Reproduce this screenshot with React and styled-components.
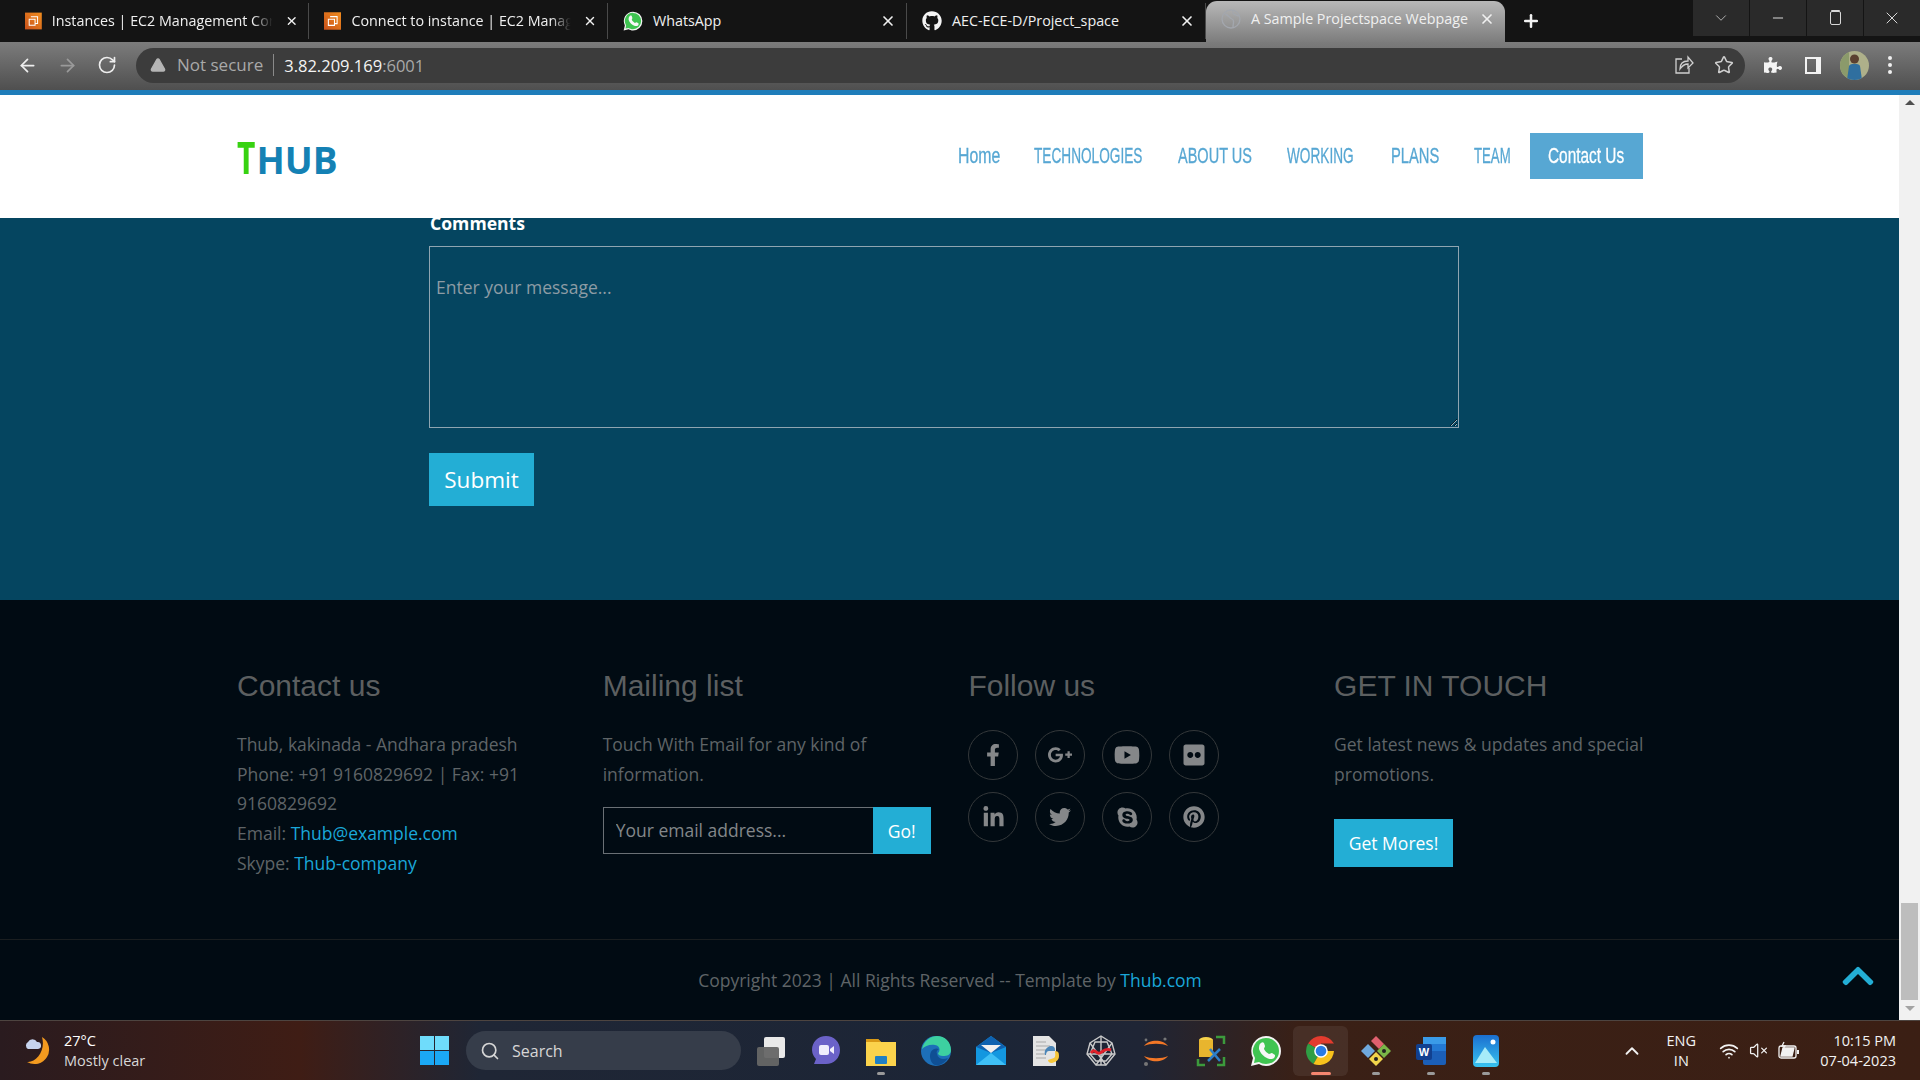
import React from 'react';
import styled, { createGlobalStyle } from 'styled-components';
import {
  FaFacebookF, FaYoutube, FaFlickr, FaLinkedinIn, FaTwitter, FaSkype, FaPinterest,
  FaChevronUp, FaGithub, FaPuzzlePiece,
} from 'react-icons/fa';
import { ImGooglePlus } from 'react-icons/im';
import {
  ArrowLeft, ArrowRight, RotateCw, TriangleAlert, Star, X, Plus, ChevronDown, Minus, Search,
  ChevronUp, Wifi, VolumeX,
} from 'lucide-react';

const GlobalStyle = createGlobalStyle`
  html, body {
    margin: 0;
    padding: 0;
    overflow: hidden;
    background: #010b13;
  }
  * {
    box-sizing: border-box;
  }
`;

const Screen = styled.div`
  width: 1920px;
  height: 1080px;
  display: flex;
  flex-direction: column;
  overflow: hidden;
  font-family: 'Open Sans', sans-serif;
`;

/* browser chrome */
const TabStrip = styled.div`
  height: 42px;
  flex: none;
  display: flex;
  background: #141414;
  padding-left: 10px;
`;

const Tab = styled.div`
  width: 299px;
  height: ${(p) => (p.$active ? '41px' : '36px')};
  margin-top: ${(p) => (p.$active ? '1px' : '3px')};
  display: flex;
  align-items: center;
  gap: 10px;
  padding: ${(p) => (p.$active ? '0 10px 5px 15px' : '0 10px 0 15px')};
  color: #f0f0f0;
  font-size: 14.3px;
  border-right: ${(p) => (p.$plain ? 'none' : '1px solid #4a4a4a')};
  border-radius: ${(p) => (p.$active ? '11px 11px 0 0' : '0')};
  background: ${(p) => (p.$active ? 'linear-gradient(#b8b8b8, #7d7d7d)' : 'transparent')};
`;

const TabTitle = styled.span`
  flex: 1;
  padding-bottom: 2px;
  white-space: nowrap;
  -webkit-mask-image: ${(p) => (p.$fade ? 'linear-gradient(to right, #000 90%, transparent 99%)' : 'none')};
`;

const NewTab = styled.div`
  width: 52px;
  display: flex;
  align-items: center;
  justify-content: center;
  color: #f2f2f2;
`;

const WindowControls = styled.div`
  margin-left: auto;
  height: 36px;
  display: flex;
  gap: 1px;
`;

const WindowButton = styled.div`
  width: ${(p) => p.$w || 56}px;
  display: flex;
  align-items: center;
  justify-content: center;
  background: #2a2a2a;
  color: #d8d8d8;
`;

const RestoreIcon = styled.div`
  width: 11px;
  height: 14px;
  border: 1px solid #d8d8d8;
  border-radius: 2px;
  box-shadow: 0 -2px 0 -1px #d8d8d8;
`;

const Toolbar = styled.div`
  height: 48px;
  flex: none;
  display: flex;
  align-items: center;
  padding: 0 14px 2px 17px;
  background: linear-gradient(#7c7c7c, #4f4f4f);
  color: #eeeeee;
`;

const NavButtons = styled.div`
  display: flex;
  gap: 19px;
  width: 119px;
`;

const Omnibox = styled.div`
  width: 1609px;
  height: 35px;
  display: flex;
  align-items: center;
  padding: 0 11px 0 14px;
  border-radius: 18px;
  background: #3c3c3c;
  font-size: 17px;
  color: #a9a9a9;
`;

const NotSecure = styled.span`
  margin-left: 11px;
  padding-right: 10px;
  border-right: 1px solid #8a8a8a;
  line-height: 22px;
`;

const Url = styled.span`
  margin-left: 10px;
  font-size: 16.5px;
  color: #f4f4f4;
`;

const Port = styled.span`
  color: #a9a9a9;
`;

const OmniActions = styled.div`
  margin-left: auto;
  display: flex;
  align-items: center;
  gap: 20px;
  color: #cfcfcf;
`;

const ToolActions = styled.div`
  margin-left: 19px;
  display: flex;
  align-items: center;
  gap: 23px;
`;

const PanelIcon = styled.div`
  width: 16px;
  height: 17px;
  border: 2px solid #f2f2f2;
  border-right-width: 5px;
`;

const AvatarSlot = styled.div`
  display: flex;
  margin: 0 -4px;
`;

const Dots = styled.div`
  display: flex;
  flex-direction: column;
  gap: 3px;
`;

const Dot = styled.i`
  width: 4px;
  height: 4px;
  border-radius: 50%;
  background: #f0f0f0;
`;

const AccentLine = styled.div`
  height: 5px;
  flex: none;
  background: #1f7dba;
`;

/* page */
const Viewport = styled.div`
  flex: 1;
  min-height: 0;
  display: flex;
`;

const PageBody = styled.div`
  width: 1899px;
  display: flex;
  flex-direction: column;
`;

const Header = styled.header`
  height: 123px;
  flex: none;
  display: flex;
  align-items: center;
  justify-content: space-between;
  padding: 0 256px 2px 237px;
  background: #fff;
`;

const Logo = styled.div`
  display: flex;
  align-items: baseline;
  margin-top: 6px;
  font-weight: 700;
  font-size: 37px;
  line-height: 40px;
  color: #1481b4;
`;

const LogoT = styled.span`
  display: inline-block;
  margin-right: -6px;
  color: #37d211;
  font-size: 44px;
  transform: scaleX(0.72);
  transform-origin: left;
`;

const Nav = styled.nav`
  display: flex;
  align-items: center;
`;

const NavLink = styled.a`
  height: 46px;
  display: flex;
  align-items: center;
  padding: 0 18px;
  color: ${(p) => (p.$cta ? '#fff' : '#57a7d3')};
  background: ${(p) => (p.$cta ? '#57a7d3' : 'transparent')};
`;

// no condensed family is installed, so the label is squeezed inside a fixed-width slot
const NavLabel = styled.span`
  display: block;
  width: ${(p) => p.$w}px;
  font-family: 'Liberation Sans', sans-serif;
  font-size: 22px;
  white-space: nowrap;
  -webkit-text-stroke: 0.3px currentColor;
  transform: scaleX(${(p) => p.$sx});
  transform-origin: left;
`;

const ContactSection = styled.section`
  height: 382px;
  flex: none;
  padding-left: 429px;
  background: #054560;
`;

const FieldLabel = styled.div`
  font-size: 17.6px;
  font-weight: 700;
  line-height: 28px;
  color: #fff;
  margin: -9px 0 9px 1px;
`;

const MessageBox = styled.textarea`
  display: block;
  width: 1030px;
  height: 182px;
  padding: 28px 6px 0;
  border: 1px solid #8fa5b1;
  border-radius: 0;
  background: transparent;
  outline: none;
  font-family: 'Open Sans', sans-serif;
  font-size: 17.5px;
  &::placeholder {
    color: #8d9ca5;
    opacity: 1;
  }
`;

const SubmitButton = styled.button`
  display: block;
  width: 105px;
  height: 53px;
  margin-top: 25px;
  border: none;
  background: #23aed5;
  color: #fff;
  font-family: 'Open Sans', sans-serif;
  font-size: 22.5px;
`;

const Footer = styled.footer`
  flex: 1;
  display: flex;
  flex-direction: column;
  background: #010b13;
  color: #5f6467;
`;

const FooterMain = styled.div`
  height: 340px;
  flex: none;
  display: grid;
  grid-template-columns: repeat(4, 365.7px);
  padding: 68px 0 0 237px;
  border-bottom: 1px solid #1a1e20;
`;

const FooterColumn = styled.div`
  width: 328px;
`;

const FooterTitle = styled.h3`
  margin: 0 0 26px;
  font-family: 'Liberation Sans', sans-serif;
  font-size: 30px;
  font-weight: 400;
  line-height: 36px;
  color: #5c5f60;
`;

const FooterText = styled.p`
  margin: 0;
  font-size: 17.5px;
  line-height: 29.7px;
`;

const FooterLink = styled.a`
  color: #1aa7d9;
`;

const MailForm = styled.div`
  display: flex;
  margin-top: 18px;
  height: 47px;
`;

const MailInput = styled.input`
  width: 270px;
  padding: 0 12px 2px;
  border: 1px solid #6a7075;
  border-right: none;
  border-radius: 0;
  background: transparent;
  outline: none;
  font-family: 'Open Sans', sans-serif;
  font-size: 17.5px;
  &::placeholder {
    color: #83878a;
    opacity: 1;
  }
`;

const GoButton = styled.button`
  width: 58px;
  border: none;
  background: #23aed5;
  color: #fff;
  font-family: 'Open Sans', sans-serif;
  font-size: 17.5px;
`;

const SocialGrid = styled.div`
  display: grid;
  grid-template-columns: repeat(4, 50px);
  gap: 12px 17px;
`;

const SocialCircle = styled.a`
  width: 50px;
  height: 50px;
  display: flex;
  align-items: center;
  justify-content: center;
  border: 1px solid #34383a;
  border-radius: 50%;
  color: #858789;
  font-size: ${(p) => p.$size || 22}px;
`;

const MoreButton = styled.button`
  display: block;
  width: 119px;
  height: 48px;
  margin-top: 30px;
  border: none;
  background: #23aed5;
  color: #fff;
  font-family: 'Open Sans', sans-serif;
  font-size: 17.5px;
`;

const FooterBottom = styled.div`
  flex: 1;
  position: relative;
  display: flex;
  align-items: center;
  justify-content: center;
  padding-left: 1px;
  font-size: 17.5px;
  color: #5f6467;
`;

const BackToTop = styled.a`
  position: absolute;
  right: 23px;
  top: 18px;
  font-size: 36px;
  line-height: 36px;
  color: #23aed5;
`;

const Scrollbar = styled.div`
  width: 21px;
  display: flex;
  flex-direction: column;
  align-items: center;
  background: #f1f1f1;
`;

const ScrollArrow = styled.div`
  width: 0;
  height: 0;
  margin: ${(p) => (p.$down ? '6px 0 9px' : '5px 0 auto')};
  border-left: 5px solid transparent;
  border-right: 5px solid transparent;
  border-bottom: ${(p) => (p.$down ? 'none' : '5px solid #505050')};
  border-top: ${(p) => (p.$down ? '5px solid #a3a3a3' : 'none')};
`;

const ScrollThumb = styled.div`
  width: 17px;
  height: 97px;
  background: #bdbdbd;
`;

/* taskbar */
const Taskbar = styled.div`
  height: 60px;
  flex: none;
  position: relative;
  display: flex;
  align-items: center;
  border-top: 1px solid #4d4440;
  background: linear-gradient(90deg, #2a1b1f 0, #3f1d15 300px, #1f2635 480px, #1c2536 1000px, #1f2535 1140px, #3a2016 1300px, #3b1f14 1920px);
  color: #f2f2f2;
`;

const Weather = styled.div`
  width: 420px;
  flex: none;
  display: flex;
  align-items: center;
  gap: 9px;
  padding-left: 25px;
`;

const WeatherText = styled.div`
  font-size: 14.5px;
  line-height: 20px;
  color: #d8d8d8;
`;

const WeatherTemp = styled.div`
  color: #fff;
`;

const StartIcon = styled.div`
  width: 29px;
  height: 29px;
  flex: none;
  display: grid;
  grid-template-columns: 1fr 1fr;
  gap: 1px;
`;

const StartPane = styled.i`
  background: ${(p) => (p.$top ? '#6fdcfb' : '#1ba8f5')};
`;

const SearchPill = styled.div`
  width: 275px;
  height: 39px;
  margin-left: 17px;
  flex: none;
  display: flex;
  align-items: center;
  gap: 12px;
  padding-left: 14px;
  border-radius: 20px;
  background: #363d4a;
  font-size: 16px;
  color: #d6d6d6;
`;

const AppIcons = styled.div`
  display: flex;
  margin-left: 2px;
`;

const AppSlot = styled.div`
  position: relative;
  width: 55px;
  height: 50px;
  display: flex;
  align-items: center;
  justify-content: center;
  border-radius: 6px;
  background: ${(p) => (p.$active ? 'rgba(255, 255, 255, 0.07)' : 'transparent')};
  &::after {
    content: '';
    display: ${(p) => (p.$state ? 'block' : 'none')};
    position: absolute;
    bottom: 1px;
    left: 50%;
    width: ${(p) => (p.$active ? '20px' : '8px')};
    height: 3px;
    border-radius: 2px;
    transform: translateX(-50%);
    background: ${(p) => (p.$active ? '#f5866f' : '#9a9a9a')};
  }
`;

const Tray = styled.div`
  margin-left: auto;
  display: flex;
  align-items: center;
  padding-right: 24px;
`;

const TrayLang = styled.div`
  margin-left: 18px;
  width: 40px;
  text-align: center;
  font-size: 14.5px;
  line-height: 20px;
`;

const TrayIcons = styled.div`
  margin-left: 18px;
  display: flex;
  align-items: center;
  gap: 10px;
`;

const Clock = styled.div`
  margin-left: 20px;
  text-align: right;
  font-size: 14.5px;
  line-height: 20px;
`;

/* drawings */
const AwsIcon = () => (
  <svg width="20" height="20" viewBox="0 0 20 20">
    <defs>
      <linearGradient id="aws" x1="0" y1="1" x2="1" y2="0">
        <stop offset="0" stopColor="#c8511b" />
        <stop offset="1" stopColor="#f28e1e" />
      </linearGradient>
    </defs>
    <rect width="20" height="20" fill="url(#aws)" />
    <path d="M7 5h8v8h-3M5 8h7v7H5z" fill="none" stroke="#fff" strokeWidth="1.2" />
  </svg>
);

const GlobeIcon = () => (
  <svg width="20" height="20" viewBox="0 0 20 20" fill="none" stroke="#a3a7ae" strokeWidth="1.3">
    <circle cx="10" cy="10" r="9" />
    <path d="M4 5c4 1 4 4 7 5s1 4 1 8M12 2c-1 3 2 4 6 5" />
  </svg>
);

const WhatsappIcon = ({ size }) => (
  <svg width={size} height={size} viewBox="0 0 32 32">
    <path d="M16 1a15 15 0 0 1 0 30c-3 0-5-1-7-2l-8 2 2-8a15 15 0 0 1 13-22z" fill="#f4f4f4" />
    <path d="M16 3a13 13 0 0 1 0 26c-3 0-5-1-7-2l-5 1 1-5a13 13 0 0 1 11-20z" fill="#3fc451" />
    <path d="M11 8c1-1 2-1 3 0l1 3c0 1-1 2-1 3 1 2 3 4 5 5 1 0 2-1 3-1l3 2c0 1 0 2-1 3-2 2-6 1-9-1-3-2-5-5-6-8 0-2 0-5 2-6z" fill="#f7f7f7" />
  </svg>
);

const ShareIcon = () => (
  <svg width="20" height="20" viewBox="0 0 20 20" fill="none" stroke="#cfcfcf" strokeWidth="1.3">
    <path d="M8 4H2v14h13v-5" />
    <path d="M6 14c0-5 3-8 8-8V2l5 6-5 5V9c-4 0-6 2-8 5z" />
  </svg>
);

const AvatarIcon = () => (
  <svg width="29" height="29" viewBox="0 0 29 29">
    <clipPath id="avatar-clip">
      <circle cx="14.500" cy="14.500" r="14.500" />
    </clipPath>
    <g clipPath="url(#avatar-clip)">
      <rect width="29" height="29" fill="#aeb08a" />
      <rect x="0" y="0" width="9" height="29" fill="#8b9a6b" />
      <path d="M7 29l2-14c1-3 10-3 11 0l2 14z" fill="#2f6f9f" />
      <circle cx="14.500" cy="8" r="4.500" fill="#5a4030" />
    </g>
  </svg>
);

const WeatherIcon = () => (
  <svg width="30" height="30" viewBox="0 0 30 30">
    <path d="M17 1a14.500 14.500 0 1 1-15 25C11 27 21 15 17 1z" fill="#f39a1f" />
    <path d="M3 13a4 4 0 0 1 0-7 5 5 0 0 1 9 0 3.500 3.500 0 0 1 1 7z" fill="#c7d4ee" />
  </svg>
);

const TaskView = () => (
  <svg width="30" height="30" viewBox="0 0 30 30">
    <rect x="8" y="1" width="21" height="21" rx="2" fill="#e9e9e9" />
    <rect x="1" y="11" width="22" height="19" rx="2" fill="#666" opacity="0.95" />
  </svg>
);

const ChatIcon = () => (
  <svg width="30" height="32" viewBox="0 0 30 32">
    <path d="M15 1c8 0 14 6 14 14s-6 14-14 14H3l2-5a14 14 0 0 1-4-9C1 7 7 1 15 1z" fill="#6b62c8" />
    <rect x="8" y="10" width="10" height="10" rx="2" fill="#f0eefc" />
    <path d="M19 14l4-3v8l-4-3z" fill="#f0eefc" />
  </svg>
);

const FolderIcon = () => (
  <svg width="30" height="30" viewBox="0 0 30 30">
    <path d="M0 3h12l3 3h15v24H0z" fill="#fbd34c" />
    <path d="M0 3h12l3 3H0z" fill="#d99a16" />
    <rect x="9" y="20" width="12" height="8" rx="1" fill="#1f7fc4" />
  </svg>
);

const EdgeIcon = () => (
  <svg width="30" height="30" viewBox="0 0 30 30">
    <circle cx="15" cy="15" r="15" fill="#1d6fb8" />
    <path d="M1 13C3 4 10 0 16 0c8 0 14 6 14 14 0 5-4 6-8 6-3 0-5-1-5-3 2-1 3-7-3-8-5-1-10 1-13 4z" fill="#3dd0a0" />
    <path d="M9 20c0-6 5-9 9-7-2 1-3 3-2 5 1 5 6 6 11 4-4 6-9 8-13 7-3-1-5-5-5-9z" fill="#0f4f94" />
  </svg>
);

const MailIcon = () => (
  <svg width="30" height="30" viewBox="0 0 30 30">
    <path d="M0 11L15 0l15 11v18H0z" fill="#1397e0" />
    <path d="M0 11L15 0l15 11-15 6z" fill="#0f62b0" />
    <path d="M5 9h20l-10 8z" fill="#f0f0f0" />
    <path d="M0 29l15-12 15 12z" fill="#3fc0f6" />
  </svg>
);

const PyFileIcon = () => (
  <svg width="30" height="30" viewBox="0 0 30 30">
    <path d="M2 0h16l7 7v23H2z" fill="#e4e4e4" />
    <path d="M5 6h10M5 10h14M5 14h10M5 18h10M5 22h10" stroke="#a8a8a8" strokeWidth="1.2" />
    <path d="M19 10c5 0 5 2 5 5h-6c-2 0-3 2-3 4h-1c-1-5 1-7 5-9z" fill="#4b86b8" />
    <path d="M24 15c4 0 4 3 4 5 0 4-3 6-7 7-3 0-4-2-4-3l6-2c2-1 1-5 1-7z" fill="#f6c638" />
  </svg>
);

const SpiderIcon = () => (
  <svg width="30" height="32" viewBox="0 0 30 32" fill="none" stroke="#c9c9c9" strokeWidth="1.4">
    <path d="M15 1l11 7 3 11-9 11H10L1 19 4 8z" />
    <path d="M15 1v29M4 8l16 22M26 8L10 30M1 19h28M9 7l12 0 5 12-6 7h-10l-6-7z" />
    <path d="M5 18c4-6 5 2 9 0s5-5 11-3" stroke="#e0202a" strokeWidth="3" />
  </svg>
);

const JupyterIcon = () => (
  <svg width="30" height="32" viewBox="0 0 30 32">
    <path d="M3 11c5-7 19-7 24 0-6-3-18-3-24 0zM3 21c5 7 19 7 24 0-6 3-18 3-24 0z" fill="#f37726" />
    <circle cx="24" cy="4" r="1.6" fill="#767677" />
    <circle cx="5" cy="5" r="1.4" fill="#767677" />
    <circle cx="5" cy="29" r="2" fill="#767677" />
  </svg>
);

const ToolsIcon = () => (
  <svg width="30" height="32" viewBox="0 0 30 32">
    <ellipse cx="10" cy="5" rx="7" ry="3" fill="#f6d24a" />
    <rect x="3" y="5" width="14" height="17" fill="#e8b52e" />
    <path d="M20 2h8v7M2 24v6h7M28 22v8h-7" fill="none" stroke="#3c9a3c" strokeWidth="2.5" />
    <path d="M12 26l12-12M14 14l10 12" stroke="#2d7fc8" strokeWidth="2.5" />
  </svg>
);

const ChromeIcon = () => (
  <svg width="30" height="30" viewBox="0 0 30 30">
    <path d="M15 15L2.1 7.500A15 15 0 0 1 28 7.500H15z" fill="#e33b2e" />
    <path d="M15 15l-7.500 13A15 15 0 0 1 2.100 7.500z" fill="#2f9e44" />
    <path d="M15 15h13a15 15 0 0 1-20.500 13z" fill="#f8c21c" />
    <circle cx="15" cy="15" r="6.800" fill="#fff" />
    <circle cx="15" cy="15" r="5.300" fill="#2a7be4" />
  </svg>
);

const GitIcon = () => (
  <svg width="32" height="32" viewBox="0 0 32 32">
    <path d="M8 9L1 16l7 7 7-7z" fill="#6fa8dc" />
    <path d="M16 1l-5 5 8 8 5-5z" fill="#e0606e" />
    <path d="M24 9l-7 7 7 7 7-7z" fill="#7ab648" />
    <path d="M16 17l-7 7 7 7 7-7z" fill="#f1d54b" />
    <circle cx="24" cy="16" r="2" fill="#222" />
    <circle cx="16" cy="24" r="2" fill="#222" />
  </svg>
);

const WordIcon = () => (
  <svg width="30" height="30" viewBox="0 0 30 30">
    <rect x="7" y="1" width="23" height="28" rx="2" fill="#1b5fb8" />
    <rect x="7" y="1" width="23" height="7" fill="#3a9be8" />
    <rect x="7" y="8" width="23" height="7" fill="#2379d4" />
    <rect x="0" y="8" width="16" height="16" rx="2" fill="#11408f" />
    <text x="8" y="20" textAnchor="middle" fontFamily="'Liberation Sans', sans-serif" fontSize="11" fontWeight="700" fill="#fff">W</text>
  </svg>
);

const PhotosIcon = () => (
  <svg width="26" height="32" viewBox="0 0 26 32">
    <defs>
      <linearGradient id="photos" x1="0" y1="0" x2="0" y2="1">
        <stop offset="0" stopColor="#1b6fd0" />
        <stop offset="1" stopColor="#38c4f0" />
      </linearGradient>
    </defs>
    <rect width="26" height="32" rx="4" fill="url(#photos)" />
    <path d="M2 28l10-16 12 16z" fill="#a6ecf9" />
    <circle cx="20" cy="7" r="2.500" fill="#fff" />
  </svg>
);

const BatteryIcon = () => (
  <svg width="22" height="20" viewBox="0 0 22 20" fill="none" stroke="#f2f2f2" strokeWidth="1.3">
    <rect x="1" y="5" width="17" height="12" rx="2" />
    <path d="M3 15l2-8h11l-2 8z" fill="#f2f2f2" />
    <path d="M20 9v4" strokeWidth="2" />
    <path d="M6 1L4 5h3L5 8" />
  </svg>
);

const tabs = [
  { title: 'Instances | EC2 Management Cor', icon: <AwsIcon />, fade: true },
  { title: 'Connect to instance | EC2 Manag', icon: <AwsIcon />, fade: true },
  { title: 'WhatsApp', icon: <WhatsappIcon size={20} /> },
  { title: 'AEC-ECE-D/Project_space', icon: <FaGithub size={20} color="#f4f4f4" /> },
];

const navItems = [
  { label: 'Home', w: 40, sx: 0.72 },
  { label: 'TECHNOLOGIES', w: 108, sx: 0.62 },
  { label: 'ABOUT US', w: 73, sx: 0.66 },
  { label: 'WORKING', w: 68, sx: 0.62 },
  { label: 'PLANS', w: 47, sx: 0.67 },
  { label: 'TEAM', w: 38, sx: 0.6 },
];

const socials = [
  { icon: <FaFacebookF />, size: 22 },
  { icon: <ImGooglePlus />, size: 24 },
  { icon: <FaYoutube />, size: 26 },
  { icon: <FaFlickr />, size: 24 },
  { icon: <FaLinkedinIn />, size: 23 },
  { icon: <FaTwitter />, size: 22 },
  { icon: <FaSkype />, size: 23 },
  { icon: <FaPinterest />, size: 22 },
];

const apps = [
  { icon: <TaskView /> },
  { icon: <ChatIcon /> },
  { icon: <FolderIcon />, state: true },
  { icon: <EdgeIcon /> },
  { icon: <MailIcon /> },
  { icon: <PyFileIcon /> },
  { icon: <SpiderIcon /> },
  { icon: <JupyterIcon /> },
  { icon: <ToolsIcon /> },
  { icon: <WhatsappIcon size={32} /> },
  { icon: <ChromeIcon />, state: true, active: true },
  { icon: <GitIcon />, state: true },
  { icon: <WordIcon />, state: true },
  { icon: <PhotosIcon />, state: true },
];

const App = () => (
  <Screen>
    <GlobalStyle />
    <TabStrip>
      {tabs.map((tab) => (
        <Tab key={tab.title}>
          {tab.icon}
          <TabTitle $fade={tab.fade}>{tab.title}</TabTitle>
          <X size={16} strokeWidth={2.5} />
        </Tab>
      ))}
      <Tab $active $plain>
        <GlobeIcon />
        <TabTitle>A Sample Projectspace Webpage</TabTitle>
        <X size={16} strokeWidth={2.5} />
      </Tab>
      <NewTab>
        <Plus size={20} strokeWidth={3} />
      </NewTab>
      <WindowControls>
        <WindowButton>
          <ChevronDown size={18} strokeWidth={1} />
        </WindowButton>
        <WindowButton>
          <Minus size={16} strokeWidth={1.5} />
        </WindowButton>
        <WindowButton>
          <RestoreIcon />
        </WindowButton>
        <WindowButton>
          <X size={20} strokeWidth={1.2} />
        </WindowButton>
      </WindowControls>
    </TabStrip>

    <Toolbar>
      <NavButtons>
        <ArrowLeft size={21} strokeWidth={2} />
        <ArrowRight size={21} strokeWidth={2} color="#9a9a9a" />
        <RotateCw size={20} strokeWidth={2} />
      </NavButtons>
      <Omnibox>
        <TriangleAlert size={16} fill="#b5b5b5" color="#b5b5b5" />
        <NotSecure>Not secure</NotSecure>
        <Url>
          3.82.209.169<Port>:6001</Port>
        </Url>
        <OmniActions>
          <ShareIcon />
          <Star size={20} strokeWidth={1.8} />
        </OmniActions>
      </Omnibox>
      <ToolActions>
        <FaPuzzlePiece size={18} color="#f4f4f4" />
        <PanelIcon />
        <AvatarSlot>
          <AvatarIcon />
        </AvatarSlot>
        <Dots>
          <Dot />
          <Dot />
          <Dot />
        </Dots>
      </ToolActions>
    </Toolbar>
    <AccentLine />

    <Viewport>
      <PageBody>
        <Header>
          <Logo>
            <LogoT>T</LogoT>HUB
          </Logo>
          <Nav>
            {navItems.map((item) => (
              <NavLink key={item.label}>
                <NavLabel $w={item.w} $sx={item.sx}>{item.label}</NavLabel>
              </NavLink>
            ))}
            <NavLink $cta>
              <NavLabel $w={77} $sx={0.7}>Contact Us</NavLabel>
            </NavLink>
          </Nav>
        </Header>

        <ContactSection>
          <FieldLabel>Comments</FieldLabel>
          <MessageBox placeholder="Enter your message..." />
          <SubmitButton>Submit</SubmitButton>
        </ContactSection>

        <Footer>
          <FooterMain>
            <FooterColumn>
              <FooterTitle>Contact us</FooterTitle>
              <FooterText>
                Thub, kakinada - Andhara pradesh
                <br />
                Phone: +91 9160829692 | Fax: +91 9160829692
                <br />
                Email: <FooterLink>Thub@example.com</FooterLink>
                <br />
                Skype: <FooterLink>Thub-company</FooterLink>
              </FooterText>
            </FooterColumn>
            <FooterColumn>
              <FooterTitle>Mailing list</FooterTitle>
              <FooterText>Touch With Email for any kind of information.</FooterText>
              <MailForm>
                <MailInput placeholder="Your email address..." />
                <GoButton>Go!</GoButton>
              </MailForm>
            </FooterColumn>
            <FooterColumn>
              <FooterTitle>Follow us</FooterTitle>
              <SocialGrid>
                {socials.map((social, i) => (
                  <SocialCircle key={i} $size={social.size}>
                    {social.icon}
                  </SocialCircle>
                ))}
              </SocialGrid>
            </FooterColumn>
            <FooterColumn>
              <FooterTitle>GET IN TOUCH</FooterTitle>
              <FooterText>Get latest news &amp; updates and special promotions.</FooterText>
              <MoreButton>Get Mores!</MoreButton>
            </FooterColumn>
          </FooterMain>
          <FooterBottom>
            <span>
              Copyright 2023 | All Rights Reserved -- Template by <FooterLink>Thub.com</FooterLink>
            </span>
            <BackToTop>
              <FaChevronUp />
            </BackToTop>
          </FooterBottom>
        </Footer>
      </PageBody>
      <Scrollbar>
        <ScrollArrow />
        <ScrollThumb />
        <ScrollArrow $down />
      </Scrollbar>
    </Viewport>

    <Taskbar>
      <Weather>
        <WeatherIcon />
        <WeatherText>
          <WeatherTemp>27°C</WeatherTemp>
          Mostly clear
        </WeatherText>
      </Weather>
      <StartIcon>
        <StartPane $top />
        <StartPane $top />
        <StartPane />
        <StartPane />
      </StartIcon>
      <SearchPill>
        <Search size={20} strokeWidth={2} />
        Search
      </SearchPill>
      <AppIcons>
        {apps.map((app, i) => (
          <AppSlot key={i} $state={app.state} $active={app.active}>
            {app.icon}
          </AppSlot>
        ))}
      </AppIcons>
      <Tray>
        <ChevronUp size={22} strokeWidth={2} />
        <TrayLang>
          ENG
          <br />
          IN
        </TrayLang>
        <TrayIcons>
          <Wifi size={20} strokeWidth={2} />
          <VolumeX size={19} strokeWidth={1.6} />
          <BatteryIcon />
        </TrayIcons>
        <Clock>
          10:15 PM
          <br />
          07-04-2023
        </Clock>
      </Tray>
    </Taskbar>
  </Screen>
);

export default App;
